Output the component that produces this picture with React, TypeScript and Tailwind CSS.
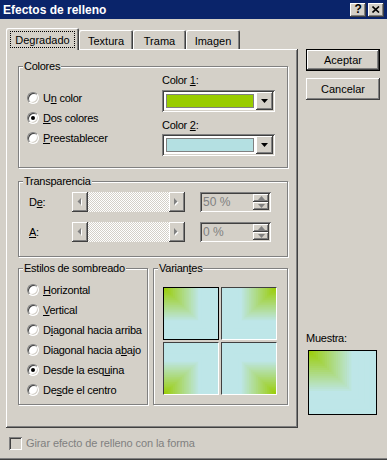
import React from "react";

const RAISED =
  "shadow-[inset_-1px_-1px_0_#404040,inset_1px_1px_0_#fff,inset_-2px_-2px_0_#808080,inset_2px_2px_0_#d4d0c8]";
const SUNKEN =
  "shadow-[inset_1px_1px_0_#808080,inset_-1px_-1px_0_#fff,inset_2px_2px_0_#404040,inset_-2px_-2px_0_#d4d0c8]";

type Corner = "tl" | "tr" | "bl" | "br";

function mix(a: number[], b: number[], t: number) {
  const c = a.map((v, i) => Math.round(v + (b[i] - v) * t));
  return `rgb(${c[0]},${c[1]},${c[2]})`;
}

// "Desde la esquina" fill: bands of max(dx, dy) from one corner
function CornerFill({ w, h, corner }: { w: number; h: number; corner: Corner }) {
  const green = [153, 204, 0];
  const blue = [190, 230, 232];
  const steps = 30;
  const rects = [];
  for (let i = steps; i >= 1; i--) {
    const s = i / steps;
    const t = Math.min(1, s * 1.5);
    const rw = w * s;
    const rh = h * s;
    const x = corner.endsWith("r") ? w - rw : 0;
    const y = corner.startsWith("b") ? h - rh : 0;
    rects.push(<rect key={i} x={x} y={y} width={rw} height={rh} fill={mix(green, blue, t)} />);
  }
  return (
    <svg width={w} height={h} className="block">
      {rects}
    </svg>
  );
}

function Radio({ children, checked }: { children: React.ReactNode; checked?: boolean }) {
  return (
    <div className="flex items-center h-[20px]">
      <span className="w-[12px] h-[12px] rounded-full bg-white border border-t-[#808080] border-l-[#808080] border-r-white border-b-white shadow-[inset_1px_1px_0_#404040,inset_-1px_-1px_0_#d4d0c8] flex items-center justify-center">
        {checked && <span className="w-[4px] h-[4px] rounded-full bg-black" />}
      </span>
      <span className="ml-[4px] whitespace-nowrap">{children}</span>
    </div>
  );
}

function Group({
  label,
  className,
  children,
}: {
  label: React.ReactNode;
  className?: string;
  children: React.ReactNode;
}) {
  return (
    <div
      className={`relative border border-[#808080] shadow-[inset_1px_1px_0_#fff,1px_1px_0_#fff] ${className ?? ""}`}
    >
      <span className="absolute -top-[7px] left-[4px] bg-[#d4d0c8] px-[1px] leading-[13px]">
        {label}
      </span>
      {children}
    </div>
  );
}

function DownArrow() {
  return (
    <svg width="7" height="4" viewBox="0 0 7 4">
      <polygon points="0,0 7,0 3.5,4" fill="#000" />
    </svg>
  );
}

function ColorPicker({ color }: { color: string }) {
  return (
    <div className={`w-[113px] h-[22px] p-[2px] flex bg-white ${SUNKEN}`}>
      <div className="flex-1 p-[2px]">
        <div className="h-full border border-[#808080]" style={{ background: color }} />
      </div>
      <div className={`w-[17px] bg-[#d4d0c8] flex items-center justify-center ${RAISED}`}>
        <DownArrow />
      </div>
    </div>
  );
}

function GrayArrow({ dir }: { dir: "left" | "right" }) {
  const pts = dir === "left" ? "4,0 4,7 0.5,3.5" : "0,0 0,7 3.5,3.5";
  return (
    <svg width="6" height="9" viewBox="0 0 6 9">
      <polygon points={pts} transform="translate(1,1)" fill="#fff" />
      <polygon points={pts} fill="#808080" />
    </svg>
  );
}

function ScrollBar() {
  return (
    <div className="w-[113px] h-[20px] flex">
      <div className={`w-[16px] bg-[#d4d0c8] flex items-center justify-center ${RAISED}`}>
        <GrayArrow dir="left" />
      </div>
      <div className="flex-1 bg-[repeating-conic-gradient(#fff_0_25%,#d4d0c8_0_50%)] bg-[length:2px_2px]" />
      <div className={`w-[16px] bg-[#d4d0c8] flex items-center justify-center ${RAISED}`}>
        <GrayArrow dir="right" />
      </div>
    </div>
  );
}

function Spin({ value }: { value: string }) {
  return (
    <div className={`w-[71px] h-[20px] p-[2px] flex bg-[#d4d0c8] ${SUNKEN}`}>
      <span className="flex-1 pl-[1px] pt-[1px] text-[#808080] text-[12px] leading-[14px] tracking-normal">
        {value}
      </span>
      <div className="w-[16px] flex flex-col">
        <div className={`flex-1 flex items-center justify-center ${RAISED}`}>
          <svg width="7" height="4" viewBox="0 0 7 4">
            <polygon points="0,4 7,4 3.5,0" fill="#808080" />
          </svg>
        </div>
        <div className={`flex-1 flex items-center justify-center ${RAISED}`}>
          <svg width="7" height="4" viewBox="0 0 7 4">
            <polygon points="0,0 7,0 3.5,4" fill="#808080" />
          </svg>
        </div>
      </div>
    </div>
  );
}

function Tab({
  label,
  width,
  selected,
}: {
  label: string;
  width: string;
  selected?: boolean;
}) {
  return (
    <div
      className={`${width} ${
        selected ? "h-[22px] -mb-[1px] relative z-10 pt-[3px]" : "h-[19px] pt-[3px]"
      } bg-[#d4d0c8] rounded-t-[2px] flex justify-center shadow-[inset_1px_1px_0_#fff,inset_-1px_0_0_#404040,inset_-2px_0_0_#808080]`}
    >
      {selected ? (
        <span className="h-[17px] px-[4px] pt-[2px] border border-dotted border-black tracking-normal">
          {label}
        </span>
      ) : (
        <span className="pt-[2px] tracking-normal">{label}</span>
      )}
    </div>
  );
}

function TitleBar() {
  return (
    <div className="h-[19px] bg-[#0a246a] flex items-center pl-[3px] pr-[3px]">
      <span className="text-white font-bold text-[12px] leading-[14px] tracking-normal flex-1">
        Efectos de relleno
      </span>
      <div
        className={`w-[16px] h-[14px] bg-[#d4d0c8] flex items-center justify-center font-bold text-[12px] ${RAISED}`}
      >
        ?
      </div>
      <div className={`ml-[2px] w-[16px] h-[14px] bg-[#d4d0c8] flex items-center justify-center ${RAISED}`}>
        <svg width="8" height="7" viewBox="0 0 8 7">
          <path d="M0.5 0.5 L7 6.5 M7 0.5 L0.5 6.5" stroke="#000" strokeWidth="1.6" />
        </svg>
      </div>
    </div>
  );
}

export default function App() {
  return (
    <div className="font-['Liberation_Sans',Arial,sans-serif] w-[387px] h-[460px] bg-[#d4d0c8] text-[11px] leading-[13px] tracking-[-0.25px] text-black flex flex-col overflow-hidden shadow-[inset_0_-1px_0_#404040,inset_0_-2px_0_#808080]">
      <TitleBar />
      <div className="flex pl-[6px] pt-[9px]">
        <div className="w-[292px] flex flex-col">
          <div className="h-[21px] flex items-end">
            <Tab label="Degradado" width="w-[73px]" selected />
            <Tab label="Textura" width="w-[54px]" />
            <Tab label="Trama" width="w-[53px]" />
            <Tab label="Imagen" width="w-[54px]" />
          </div>

          <div className={`h-[379px] pl-[12px] pt-[17px] flex flex-col ${RAISED}`}>
            <Group label="Colores" className="w-[270px] h-[102px] flex">
              <div className="w-[143px] pt-[21px] pl-[8px] flex flex-col">
                <Radio>
                  U<u>n</u> color
                </Radio>
                <Radio checked>
                  <u>D</u>os colores
                </Radio>
                <Radio>
                  <u>P</u>reestablecer
                </Radio>
              </div>
              <div className="pt-[7px] flex flex-col">
                <span className="h-[14px]">
                  Color <u>1</u>:
                </span>
                <div className="mt-[2px]">
                  <ColorPicker color="#99cc00" />
                </div>
                <span className="mt-[7px] h-[14px]">
                  Color <u>2</u>:
                </span>
                <div className="mt-[1px]">
                  <ColorPicker color="#b4e0e2" />
                </div>
              </div>
            </Group>

            <Group
              label="Transparencia"
              className="mt-[13px] w-[270px] h-[76px] pt-[10px] pl-[10px] flex flex-col gap-[10px]"
            >
              <div className="flex items-center">
                <span className="w-[43px]">
                  D<u>e</u>:
                </span>
                <ScrollBar />
                <div className="ml-[15px]">
                  <Spin value="50 %" />
                </div>
              </div>
              <div className="flex items-center">
                <span className="w-[43px]">
                  <u>A</u>:
                </span>
                <ScrollBar />
                <div className="ml-[15px]">
                  <Spin value="0 %" />
                </div>
              </div>
            </Group>

            <div className="mt-[11px] flex">
              <Group
                label="Estilos de sombreado"
                className="w-[130px] h-[137px] pt-[11px] pl-[8px] flex flex-col"
              >
                <Radio>
                  <u>H</u>orizontal
                </Radio>
                <Radio>
                  <u>V</u>ertical
                </Radio>
                <Radio>
                  D<u>i</u>agonal hacia arriba
                </Radio>
                <Radio>
                  Diagonal hacia a<u>b</u>ajo
                </Radio>
                <Radio checked>
                  Desde la esq<u>u</u>ina
                </Radio>
                <Radio>
                  De<u>s</u>de el centro
                </Radio>
              </Group>
              <Group
                label={
                  <>
                    Varian<u>t</u>es
                  </>
                }
                className="ml-[5px] w-[135px] h-[137px] pt-[18px] pl-[9px]"
              >
                <div className="grid grid-cols-[56px_56px] gap-[2px]">
                  <div className="border border-black">
                    <CornerFill w={54} h={51} corner="tl" />
                  </div>
                  <div className="border border-t-[#404040] border-l-[#404040] border-b-white border-r-white">
                    <CornerFill w={54} h={51} corner="tr" />
                  </div>
                  <div className="border border-t-[#404040] border-l-[#404040] border-b-white border-r-white">
                    <CornerFill w={54} h={51} corner="bl" />
                  </div>
                  <div className="border border-t-[#404040] border-l-[#404040] border-b-white border-r-white">
                    <CornerFill w={54} h={51} corner="br" />
                  </div>
                </div>
              </Group>
            </div>
          </div>

          <div className="mt-[8px] pl-[3px] flex items-center">
            <span className={`w-[13px] h-[13px] bg-[#d4d0c8] ${SUNKEN}`} />
            <span className="ml-[4px] text-[#808080] leading-[14px] tracking-[-0.1px]">
              Girar efecto de relleno con la forma
            </span>
          </div>
        </div>

        <div className="ml-[8px] pt-[21px] flex flex-col">
          <div className="w-[74px] h-[22px] border border-black">
            <div className={`h-full flex items-center justify-center tracking-normal ${RAISED}`}>Aceptar</div>
          </div>
          <div
            className={`mt-[7px] w-[74px] h-[22px] flex items-center justify-center tracking-normal ${RAISED}`}
          >
            Cancelar
          </div>
          <span className="mt-[231px] leading-[14px] pl-[-1px]">Muestra:</span>
          <div className="mt-[5px] ml-[2px] w-[69px] h-[65px] border border-black">
            <CornerFill w={67} h={63} corner="tl" />
          </div>
        </div>
      </div>
    </div>
  );
}
